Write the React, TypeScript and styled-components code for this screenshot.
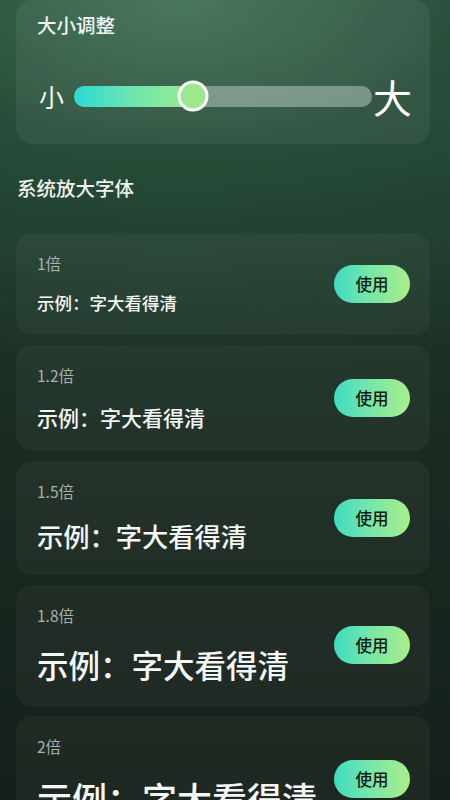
import React from "react";
import styled, { createGlobalStyle } from "styled-components";

const Global = createGlobalStyle`
  html, body { margin: 0; padding: 0; }
  body {
    width: 450px;
    height: 800px;
    overflow: hidden;
    background: #17231c;
    font-family: "Noto Sans CJK SC", "Noto Sans", sans-serif;
  }
`;

const Page = styled.div`
  width: 450px;
  height: 800px;
  box-sizing: border-box;
  padding: 0 20px 0 16px;
  overflow: hidden;
  background:
    radial-gradient(ellipse 700px 380px at 40% 0%, rgba(66, 118, 88, 0.85) 0%, rgba(44, 86, 62, 0.55) 40%, rgba(30, 55, 42, 0) 100%),
    linear-gradient(180deg, #28493a 0%, #1f3a2c 25%, #1a2b22 55%, #17241d 80%, #15201a 100%);
  display: flex;
  flex-direction: column;
`;

const SizeCard = styled.section`
  background: rgba(255, 255, 255, 0.06);
  border-radius: 16px;
  padding: 12px 18px 23px 21px;
`;

const CardTitle = styled.div`
  color: #f2f5f3;
  font-size: 19.5px;
  line-height: 26px;
  font-weight: 500;
`;

const SliderRow = styled.div`
  margin-top: 33px;
  height: 50px;
  display: flex;
  align-items: center;
  padding-left: 2px;
`;

const SmallMark = styled.span`
  color: #f4f6f5;
  font-size: 25px;
  line-height: 1;
`;

const BigMark = styled.span`
  color: #ffffff;
  font-size: 39px;
  line-height: 1;
  margin-left: 1px;
`;

const Track = styled.div`
  position: relative;
  flex: 1;
  height: 21px;
  margin-left: 10px;
  border-radius: 11px;
  background: rgba(190, 210, 198, 0.5);
`;

const Fill = styled.div`
  height: 100%;
  border-radius: 11px;
  background: linear-gradient(90deg, #2cdad2 0%, #6fe6b0 50%, #9ce98e 100%);
`;

const Thumb = styled.div`
  position: absolute;
  top: 50%;
  width: 25px;
  height: 25px;
  border-radius: 50%;
  background: #9be88f;
  border: 3px solid #ffffff;
  transform: translate(-50%, -50%);
`;

const SectionTitle = styled.h2`
  margin: 31px 0 0 1px;
  color: #eef2ef;
  font-size: 19.5px;
  line-height: 26px;
  font-weight: 500;
`;

const List = styled.div`
  margin-top: 32px;
  display: flex;
  flex-direction: column;
  gap: 10px;
`;

const ItemCard = styled.div`
  background: rgba(255, 255, 255, 0.04);
  border-radius: 16px;
  padding: 20px 20px 20px 21px;
  display: flex;
  align-items: center;
  justify-content: space-between;
`;

const ItemText = styled.div`
  display: flex;
  flex-direction: column;
  gap: 18px;
`;

const Scale = styled.div`
  color: #a9b1ac;
  font-size: 15.5px;
  line-height: 20px;
`;

const Example = styled.div<{ $size: number }>`
  color: #f5f7f6;
  font-size: ${(p) => p.$size}px;
  line-height: 1.36;
  font-weight: 500;
  white-space: nowrap;
`;

const UseButton = styled.button`
  flex: none;
  width: 76px;
  height: 38px;
  border: none;
  border-radius: 19px;
  background: linear-gradient(90deg, #3fdcc4 0%, #79e7a6 50%, #a9ee88 100%);
  color: #111a15;
  font-family: "Noto Sans CJK SC", "Noto Sans", sans-serif;
  font-size: 16.5px;
  font-weight: 500;
  padding: 0;
  cursor: pointer;
`;

const items = [
  { label: "1倍", scale: 1 },
  { label: "1.2倍", scale: 1.2 },
  { label: "1.5倍", scale: 1.5 },
  { label: "1.8倍", scale: 1.8 },
  { label: "2倍", scale: 2 },
];

export default function App() {
  const pct = 40;
  return (
    <>
      <Global />
      <Page>
        <SizeCard>
          <CardTitle>大小调整</CardTitle>
          <SliderRow>
            <SmallMark>小</SmallMark>
            <Track>
              <Fill style={{ width: `${pct}%` }} />
              <Thumb style={{ left: `${pct}%` }} />
            </Track>
            <BigMark>大</BigMark>
          </SliderRow>
        </SizeCard>
        <SectionTitle>系统放大字体</SectionTitle>
        <List>
          {items.map((it) => (
            <ItemCard key={it.label}>
              <ItemText>
                <Scale>{it.label}</Scale>
                <Example $size={17.5 * it.scale}>示例：字大看得清</Example>
              </ItemText>
              <UseButton>使用</UseButton>
            </ItemCard>
          ))}
        </List>
      </Page>
    </>
  );
}
